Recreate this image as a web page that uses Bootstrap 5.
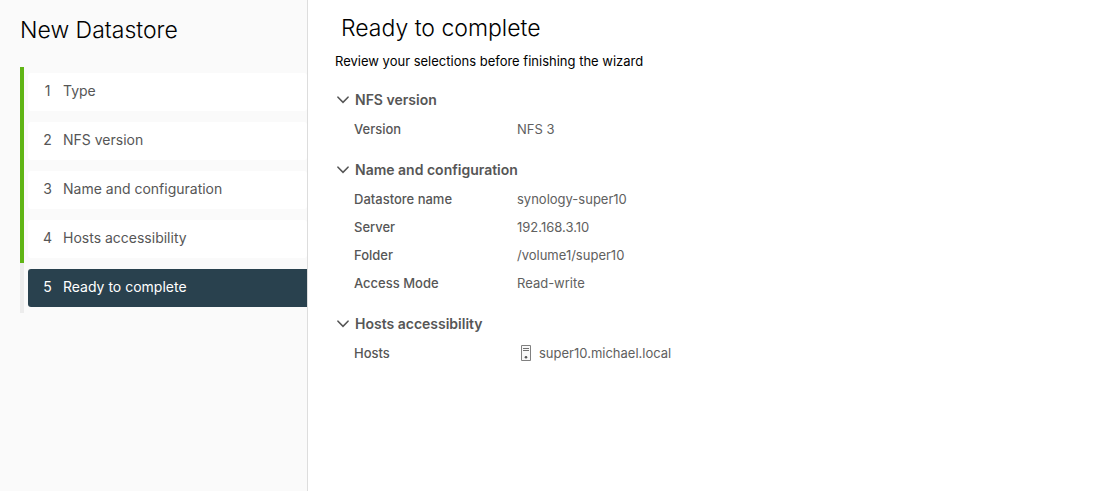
<!DOCTYPE html>
<html lang="en">
<head>
<meta charset="utf-8">
<meta name="viewport" content="width=device-width, initial-scale=1">
<title>New Datastore</title>
<link href="https://cdn.jsdelivr.net/npm/bootstrap@5.3.0/dist/css/bootstrap.min.css" rel="stylesheet">
<style>
  body { font-family: Metropolis, Inter, "Open Sans", sans-serif; font-size: 13px; line-height: 20px; color: #565656; background: #fff; }
  .wizard-side { width: 308px; background: #fafafa; border-right: 1px solid #ddd; padding: 16px 0 0 20px; }
  .wizard-title { font-size: 23px; line-height: 28px; font-weight: 300; color: #000; }
  .wizard-side .wizard-title { margin-bottom: 23px; }
  .step { border-left: 4px solid #ececec; padding: 6px 0 5px 4px; }
  .step.done { border-left-color: #60b515; }
  .step:last-child { padding-bottom: 6px; }
  .step a { height: 38px; padding: 0 0 2px 15px; gap: 11px; border-radius: 3px; background: #fff; color: #565656; font-size: 14px; }
  .step.current a { background: #29414e; color: #fff; border-radius: 3px 0 0 3px; }
  .step-no { width: 9px; text-align: center; }
  .wizard-main { padding: 14px 27px; }
  .wizard-main .wizard-title { padding-left: 6px; margin-bottom: 9px; }
  .intro { color: #000; margin-bottom: 15px; }
  .section { margin-bottom: 13px; }
  .section-toggle { height: 29px; padding: 0 0 1px 2px; gap: 6px; font-size: 14px; line-height: 20px; font-weight: 600; color: #565656; }
  .facts th, .facts td { height: 28px; padding: 0; vertical-align: middle; }
  .facts th { width: 182px; padding-left: 19px; font-weight: 500; }
  .facts td { font-weight: 400; color: #606060; }
</style>
</head>
<body>
<div class="d-flex min-vh-100">
  <aside class="wizard-side flex-shrink-0">
    <h1 class="wizard-title">New Datastore</h1>
    <ol class="list-unstyled mb-0">
      <li class="step done"><a href="#" class="d-flex align-items-center text-decoration-none"><span class="step-no">1</span><span>Type</span></a></li>
      <li class="step done"><a href="#" class="d-flex align-items-center text-decoration-none"><span class="step-no">2</span><span>NFS version</span></a></li>
      <li class="step done"><a href="#" class="d-flex align-items-center text-decoration-none"><span class="step-no">3</span><span>Name and configuration</span></a></li>
      <li class="step done"><a href="#" class="d-flex align-items-center text-decoration-none"><span class="step-no">4</span><span>Hosts accessibility</span></a></li>
      <li class="step current"><a href="#" class="d-flex align-items-center text-decoration-none" aria-current="step"><span class="step-no">5</span><span>Ready to complete</span></a></li>
    </ol>
  </aside>
  <main class="wizard-main flex-grow-1">
    <h2 class="wizard-title">Ready to complete</h2>
    <p class="intro">Review your selections before finishing the wizard</p>

    <section class="section">
      <button type="button" class="section-toggle btn border-0 d-flex align-items-center" data-bs-toggle="collapse" data-bs-target="#nfs" aria-expanded="true" aria-controls="nfs">
        <svg width="12" height="8" viewBox="0 0 12 8" fill="none" stroke="#565656" stroke-width="1.6" stroke-linecap="round" aria-hidden="true"><path d="M1 1.2 6 6.4 11 1.2"/></svg>
        <span>NFS version</span>
      </button>
      <div id="nfs" class="collapse show">
        <table class="facts w-100">
          <tr><th scope="row">Version</th><td>NFS 3</td></tr>
        </table>
      </div>
    </section>

    <section class="section">
      <button type="button" class="section-toggle btn border-0 d-flex align-items-center" data-bs-toggle="collapse" data-bs-target="#config" aria-expanded="true" aria-controls="config">
        <svg width="12" height="8" viewBox="0 0 12 8" fill="none" stroke="#565656" stroke-width="1.6" stroke-linecap="round" aria-hidden="true"><path d="M1 1.2 6 6.4 11 1.2"/></svg>
        <span>Name and configuration</span>
      </button>
      <div id="config" class="collapse show">
        <table class="facts w-100">
          <tr><th scope="row">Datastore name</th><td>synology-super10</td></tr>
          <tr><th scope="row">Server</th><td>192.168.3.10</td></tr>
          <tr><th scope="row">Folder</th><td>/volume1/super10</td></tr>
          <tr><th scope="row">Access Mode</th><td>Read-write</td></tr>
        </table>
      </div>
    </section>

    <section class="section">
      <button type="button" class="section-toggle btn border-0 d-flex align-items-center" data-bs-toggle="collapse" data-bs-target="#hosts" aria-expanded="true" aria-controls="hosts">
        <svg width="12" height="8" viewBox="0 0 12 8" fill="none" stroke="#565656" stroke-width="1.6" stroke-linecap="round" aria-hidden="true"><path d="M1 1.2 6 6.4 11 1.2"/></svg>
        <span>Hosts accessibility</span>
      </button>
      <div id="hosts" class="collapse show">
        <table class="facts w-100">
          <tr><th scope="row">Hosts</th><td>
            <span class="d-flex align-items-center gap-1">
              <svg width="18" height="16" viewBox="0 0 18 16" aria-hidden="true"><path d="M4.5.5h9v15h-9z" fill="#f8f8f8" stroke="#808080"/><path d="M6 3.5h6M6 5.5h6" stroke="#707070"/><circle cx="9" cy="12.3" r="1.3" fill="#565656"/></svg>
              <span>super10.michael.local</span>
            </span>
          </td></tr>
        </table>
      </div>
    </section>
  </main>
</div>
<script src="https://cdn.jsdelivr.net/npm/bootstrap@5.3.0/dist/js/bootstrap.bundle.min.js"></script>
</body>
</html>
